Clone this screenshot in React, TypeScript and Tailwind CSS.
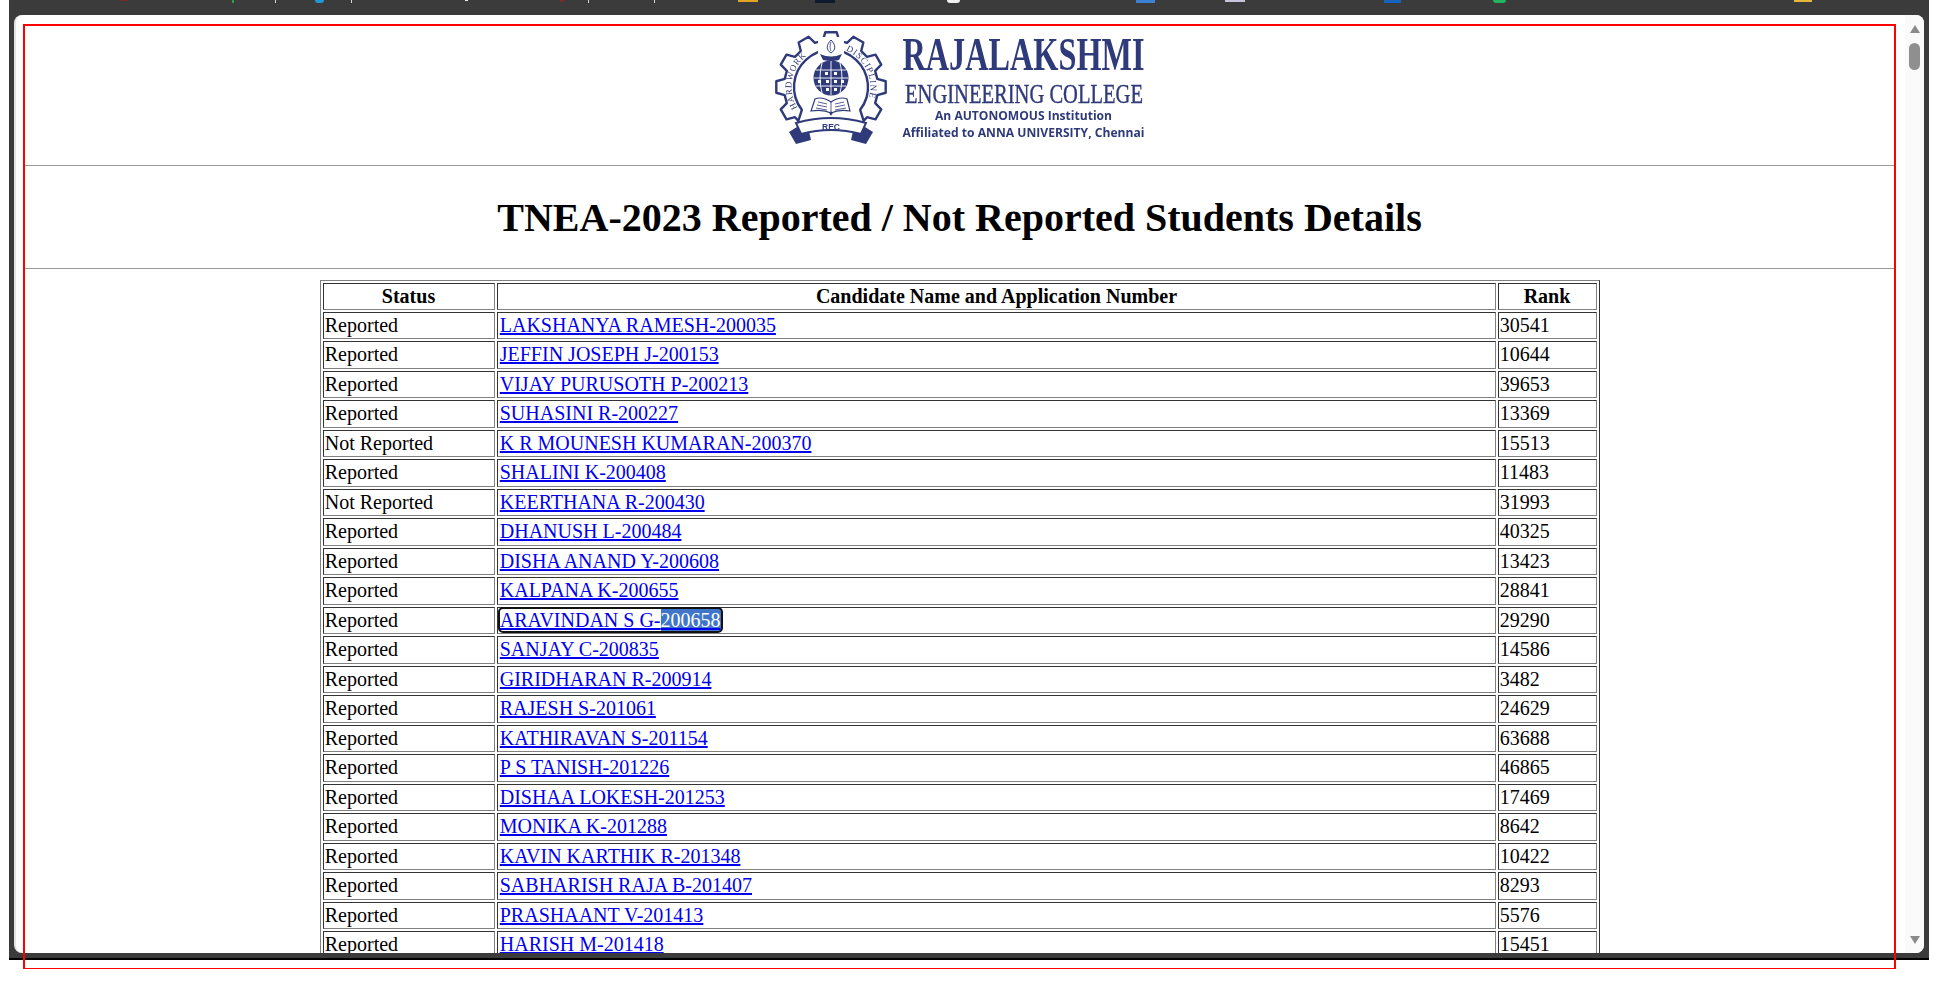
const rows: [string, string, string][] = [
  ['Reported', 'LAKSHANYA RAMESH-200035', '30541'],
  ['Reported', 'JEFFIN JOSEPH J-200153', '10644'],
  ['Reported', 'VIJAY PURUSOTH P-200213', '39653'],
  ['Reported', 'SUHASINI R-200227', '13369'],
  ['Not Reported', 'K R MOUNESH KUMARAN-200370', '15513'],
  ['Reported', 'SHALINI K-200408', '11483'],
  ['Not Reported', 'KEERTHANA R-200430', '31993'],
  ['Reported', 'DHANUSH L-200484', '40325'],
  ['Reported', 'DISHA ANAND Y-200608', '13423'],
  ['Reported', 'KALPANA K-200655', '28841'],
  ['Reported', 'ARAVINDAN S G-200658', '29290'],
  ['Reported', 'SANJAY C-200835', '14586'],
  ['Reported', 'GIRIDHARAN R-200914', '3482'],
  ['Reported', 'RAJESH S-201061', '24629'],
  ['Reported', 'KATHIRAVAN S-201154', '63688'],
  ['Reported', 'P S TANISH-201226', '46865'],
  ['Reported', 'DISHAA LOKESH-201253', '17469'],
  ['Reported', 'MONIKA K-201288', '8642'],
  ['Reported', 'KAVIN KARTHIK R-201348', '10422'],
  ['Reported', 'SABHARISH RAJA B-201407', '8293'],
  ['Reported', 'PRASHAANT V-201413', '5576'],
  ['Reported', 'HARISH M-201418', '15451'],
];

const cell = 'border border-t-[#333] border-l-[#333] border-r-[#808080] border-b-[#808080] px-[1.25px] py-[1.25px]';

const navy = '#2f3a7a';

// bottoms of the bookmark icons, cut off by the top edge of the screenshot
const bookmarkStubs = [
  'left-[120px] w-[8px] h-[1px] bg-[#7a2a2a]',
  'left-[232px] w-[2px] h-[3px] bg-[#2f9e44]',
  'left-[275px] w-[1px] h-[3px] bg-[#d8d8d8]',
  'left-[315px] w-[9px] h-[3px] rounded-b-full bg-[#1e9bd7]',
  'left-[351px] w-[1px] h-[3px] bg-[#d8d8d8]',
  'left-[465px] w-[3px] h-[1px] bg-[#e8e8e8]',
  'left-[560px] w-[4px] h-[2px] bg-[#7a2a2a]',
  'left-[588px] w-[1px] h-[3px] bg-[#d8d8d8]',
  'left-[654px] w-[1px] h-[3px] bg-[#d8d8d8]',
  'left-[738px] w-[20px] h-[2px] bg-[#e0a526]',
  'left-[815px] w-[20px] h-[3px] bg-[#0f1a2e]',
  'left-[947px] w-[13px] h-[3px] rounded-b-full bg-[#f0f0f0]',
  'left-[1136px] w-[19px] h-[3px] bg-[#3b82d6]',
  'left-[1225px] w-[20px] h-[2px] bg-[#c6c3dc]',
  'left-[1384px] w-[17px] h-[3px] bg-[#1565c0]',
  'left-[1493px] w-[13px] h-[3px] rounded-b-full bg-[#22b35e]',
  'left-[1794px] w-[18px] h-[2px] bg-[#e8b63a]',
];

function polar(r: number, deg: number) {
  const a = (deg * Math.PI) / 180;
  return `${(r * Math.sin(a)).toFixed(2)} ${(-r * Math.cos(a)).toFixed(2)}`;
}

// gear outline, open at the bottom where the ribbon sits
function gearPath() {
  const tip = 55;
  const root = 47;
  const inner = 37;
  let d = `M${polar(inner, -128)} L${polar(root, -136)}`;
  for (let t = -120; t <= 120; t += 30) {
    d += ` L${polar(root, t - 10)} L${polar(tip, t - 6)} L${polar(tip, t + 6)} L${polar(root, t + 10)}`;
  }
  d += ` L${polar(root, 136)} L${polar(inner, 128)}`;
  d += ` A${inner} ${inner} 0 1 0 ${polar(inner, -128)} Z`;
  return d;
}

function Logo() {
  return (
    <svg width="372" height="119" viewBox="0 -6 372 119" className="block blur-[0.35px]">
      <g transform="translate(57 55)">
        <path d={gearPath()} fill="#fff" stroke={navy} strokeWidth="2.4" strokeLinejoin="round" />
        <path id="arcL" d={`M${polar(39.5, -122)} A39.5 39.5 0 0 1 ${polar(39.5, -20)}`} fill="none" />
        <path id="arcR" d={`M${polar(39.5, 22)} A39.5 39.5 0 0 1 ${polar(39.5, 126)}`} fill="none" />
        <text fontFamily="'Liberation Serif', serif" fontSize="9" fill={navy} letterSpacing="0.6">
          <textPath href="#arcL">HARDWORK</textPath>
        </text>
        <text fontFamily="'Liberation Serif', serif" fontSize="9" fill={navy} letterSpacing="0.9">
          <textPath href="#arcR">DISCIPLINE</textPath>
        </text>
        {/* lamp */}
        <rect x="-13" y="-50" width="26" height="23" fill="#fff" />
        <path d="M0 -47 C-5 -42 -5 -37 0 -34 C5 -37 5 -42 0 -47Z" fill="#fff" stroke={navy} strokeWidth="1" />
        <path d="M0 -45 C-1.5 -41 -1 -38 0 -36" fill="none" stroke={navy} strokeWidth="0.8" />
        <path d="M-11 -33 Q0 -28 11 -33 L8 -27 Q0 -25 -8 -27Z" fill={navy} />
        {/* globe */}
        <circle cy="-9" r="17.5" fill={navy} />
        <path d="M-17 -9H17M-15 -17H15M-15 -1H15M0 -26V8M-9 -24Q-13 -9 -9 6M9 -24Q13 -9 9 6" stroke="#fff" strokeWidth="0.9" fill="none" />
        <path d="M-6 -15h3v3h-3zM3 -15h3v3h-3zM-13 -7h3v3h-3zM-5 -7h3v3h-3zM3 -7h3v3h-3zM10 -7h3v3h-3zM-5 1h3v3h-3zM3 1h3v3h-3z" fill="#fff" />
        {/* book */}
        <path d="M0 15 Q-9 9 -16 12 L-20 24 Q-8 22 0 26 Q8 22 19 24 L16 12 Q9 9 0 15Z" fill="#fff" stroke={navy} strokeWidth="1.2" />
        <path d="M0 15V26M-13 15L-4 17M-14 18L-4 20M-15 21L-4 23M13 15L4 17M14 18L4 20M15 21L4 23" stroke={navy} strokeWidth="0.8" />
        <path d="M0 24l1.6 2.4-1.6 2.4-1.6-2.4z" fill={navy} />
        {/* ribbon */}
        <path d="M-34 40 L-42 45 L-35 57 L-20 53 L-22 44Z" fill={navy} />
        <path d="M34 40 L42 45 L35 57 L20 53 L22 44Z" fill={navy} />
        <path d="M-35 36 Q0 26 35 36 L30 47 Q0 39 -30 47Z" fill="#fff" stroke={navy} strokeWidth="2" />
        <text y="42.5" textAnchor="middle" fontFamily="'Liberation Sans', sans-serif" fontWeight="700" fontSize="8.5" fill={navy}>REC</text>
      </g>
      {/* name */}
      <text x="128.5" y="38" fontFamily="'Liberation Serif', serif" fontSize="47" fontWeight="700" fill={navy} textLength="242" lengthAdjust="spacingAndGlyphs">RAJALAKSHMI</text>
      <text x="131" y="70.5" fontFamily="'Liberation Serif', serif" fontSize="27" fill={navy} stroke={navy} strokeWidth="0.4" textLength="238" lengthAdjust="spacingAndGlyphs">ENGINEERING COLLEGE</text>
      <text x="161" y="88" fontFamily="'Open Sans', sans-serif" fontSize="12.6" fontWeight="700" fill={navy} textLength="177" lengthAdjust="spacingAndGlyphs">An AUTONOMOUS Institution</text>
      <text x="128.5" y="105" fontFamily="'Open Sans', sans-serif" fontSize="12.6" fontWeight="700" fill={navy} textLength="242" lengthAdjust="spacingAndGlyphs">Affiliated to ANNA UNIVERSITY, Chennai</text>
    </svg>
  );
}

export default function App() {
  return (
    <div className="relative h-[994px] w-full overflow-hidden bg-white font-['Liberation_Serif',serif] text-[20px] text-black">
      {/* browser window */}
      <div className="ml-[9px] flex h-[960px] w-[1920px] flex-col border-b-2 border-black bg-[#3b3b3b] px-[5px] pt-[15px] pb-[5px]">
        <div className="flex min-h-0 flex-1 overflow-hidden rounded-[8px] border-l-2 border-[#e4e4e4] bg-white">
          <div className="min-w-0 flex-1 overflow-hidden pr-[11px] pl-[9px]">
            <div className="flex h-[150px] items-start justify-center pt-[11px]">
              <Logo />
            </div>
            <div className="h-px bg-[#9a9a9a]" />
            <div className="flex h-[102px] items-center justify-center pt-[1px]">
              <h1 className="text-[40px] leading-[46px] font-bold">TNEA-2023 Reported / Not Reported Students Details</h1>
            </div>
            <div className="h-px bg-[#9a9a9a]" />
            <table className="mx-auto mt-[11px] w-[1280px] table-fixed border-separate border-spacing-[2px] border border-t-[#808080] border-l-[#808080] border-r-[#333] border-b-[#333]">
              <thead>
                <tr>
                  <th className={`${cell} w-[172px] leading-[22px] font-bold`}>Status</th>
                  <th className={`${cell} w-[999px] pl-[2.25px] leading-[22px] font-bold`}>Candidate Name and Application Number</th>
                  <th className={`${cell} leading-[22px] font-bold`}>Rank</th>
                </tr>
              </thead>
              <tbody>
                {rows.map(([status, name, rank]) => {
                  const selected = name.startsWith('ARAVINDAN');
                  return (
                    <tr key={name}>
                      <td className={`${cell} leading-[23px]`}>{status}</td>
                      <td className={`${cell} pl-[2.25px] leading-[23px]`}>
                        {selected ? (
                          <a href="#" className="rounded-[3px] text-[#0000ee] underline outline-2 outline-[#111]">
                            ARAVINDAN S G-<span className="bg-[#3f76c9] text-white">200658</span>
                          </a>
                        ) : (
                          <a href="#" className="text-[#0000ee] underline">{name}</a>
                        )}
                      </td>
                      <td className={`${cell} leading-[23px]`}>{rank}</td>
                    </tr>
                  );
                })}
              </tbody>
            </table>
          </div>
          {/* scrollbar */}
          <div className="flex w-[19px] shrink-0 flex-col items-center bg-[#fafafa] pt-[10px] pb-[9px]">
            <div className="h-0 w-0 border-x-[5.5px] border-b-[8px] border-x-transparent border-b-[#8a8a8a]" />
            <div className="mt-[10px] h-[27px] w-[11px] rounded-full bg-[#8f8f8f]" />
            <div className="mt-auto h-0 w-0 border-x-[5.5px] border-t-[8px] border-x-transparent border-t-[#8a8a8a]" />
          </div>
        </div>
      </div>
      {bookmarkStubs.map((stub) => (
        <div key={stub} className={`absolute top-0 ${stub}`} />
      ))}
      {/* red annotation box drawn on top of the screenshot */}
      <div className="pointer-events-none absolute top-[24px] left-[23px] h-[945px] w-[1873px] border-x-2 border-t-2 border-b border-[#ff0000]" />
    </div>
  );
}
